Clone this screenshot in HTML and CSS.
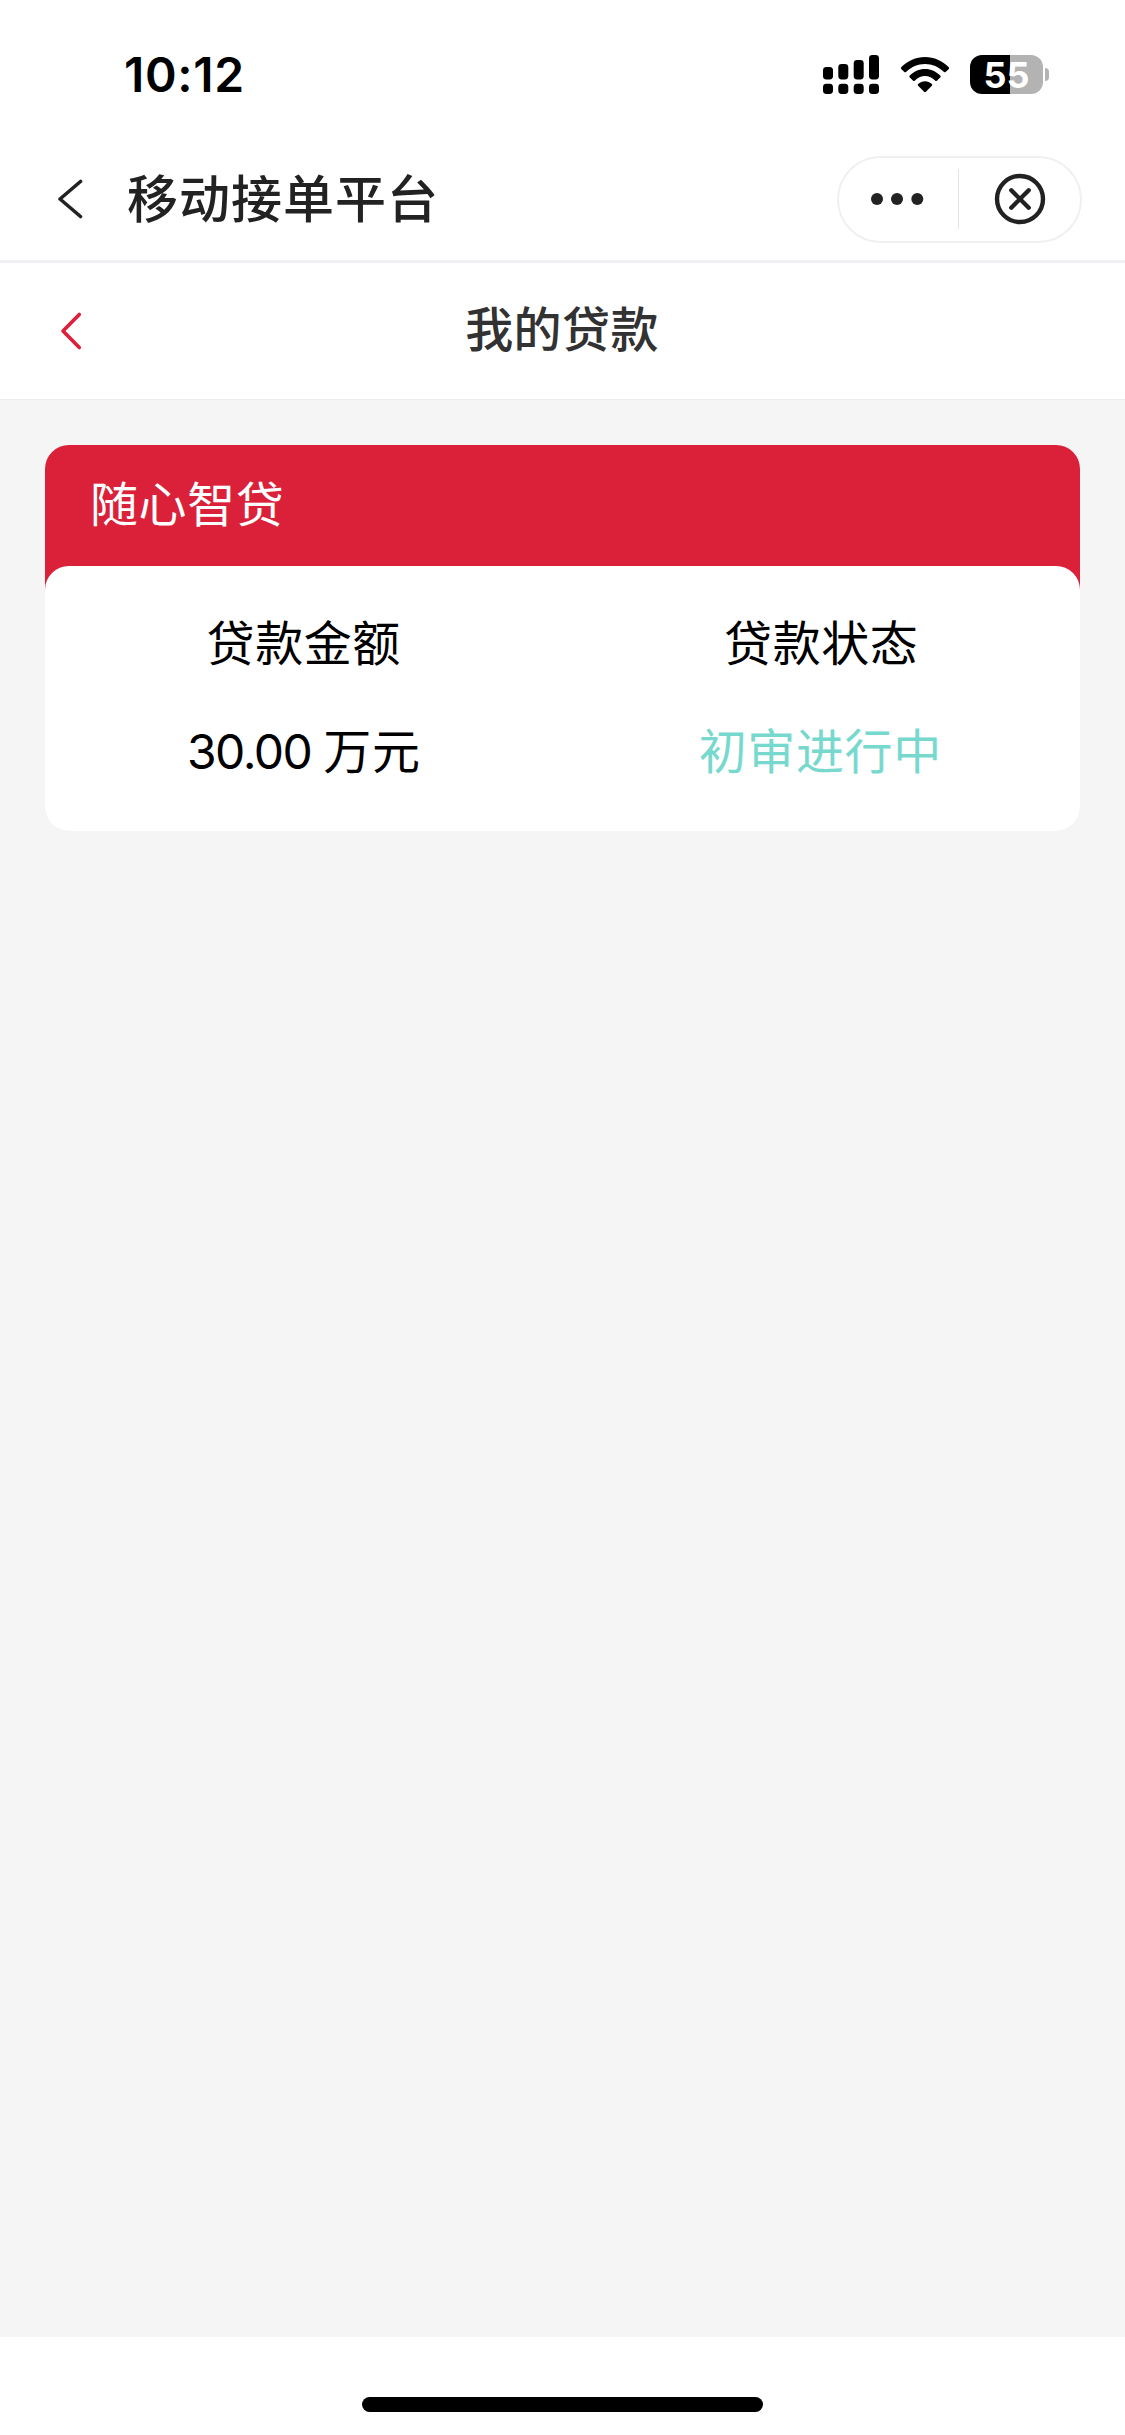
FILE: index.html
```html
<!DOCTYPE html>
<html lang="zh-CN">
<head>
<meta charset="utf-8">
<title>我的贷款</title>
<link rel="stylesheet" href="styles.css">
</head>
<body>
<div class="screen">
  <div class="status-bar">
    <span class="time">10:12</span>
    <div class="status-icons">
      <svg class="signal" width="56" height="39" viewBox="0 0 56 39">
        <rect x="0" y="12" width="10" height="12.5" rx="3.4"/>
        <rect x="15.3" y="9" width="10" height="15.5" rx="3.4"/>
        <rect x="30.7" y="5" width="10" height="19.5" rx="3.4"/>
        <rect x="46" y="0" width="10" height="24.5" rx="3.4"/>
        <rect x="0" y="28.7" width="10" height="10.3" rx="3.4"/>
        <rect x="15.3" y="28.7" width="10" height="10.3" rx="3.4"/>
        <rect x="30.7" y="28.7" width="10" height="10.3" rx="3.4"/>
        <rect x="46" y="28.7" width="10" height="10.3" rx="3.4"/>
      </svg>
      <svg class="wifi" width="50" height="39" viewBox="0 0 50 39">
        <path d="M1.2 12.3C7.5 5.6 16 1.9 25 1.9s17.500 3.700 23.800 10.400q.7.8 0 1.600l-3.200 3.100q-.8.7-1.600 0C38.900 11.800 32.200 8.900 25 8.900S11.100 11.800 6 17q-.8.7-1.600 0l-3.200-3.100q-.7-.8 0-1.600z"/>
        <path d="M9.600 20.700C13.700 16.400 19.100 13.900 25 13.900s11.300 2.500 15.400 6.800q.7.800 0 1.600l-3.500 3.400q-.8.700-1.600 0C32.500 22.800 29 21.100 25 21.100s-7.500 1.700-10.300 4.600q-.8.700-1.600 0l-3.500-3.400q-.7-.8 0-1.600z"/>
        <path d="M18.100 29.100C20 27.400 22.400 26.300 25 26.300s5 1.100 6.900 2.800q.8.800 0 1.600l-6 6q-.9.900-1.800 0l-6-6q-.8-.8 0-1.600z"/>
      </svg>
      <div class="battery">
        <div class="battery-body">55</div>
        <div class="battery-cap"></div>
      </div>
    </div>
  </div>

  <div class="app-bar">
    <svg class="app-back" width="26" height="42" viewBox="0 0 26 42">
      <path d="M23.500 3.500 3 21l20.500 17.500"/>
    </svg>
    <div class="app-title">移动接单平台</div>
    <div class="capsule">
      <svg class="more" width="54" height="14" viewBox="0 0 54 14">
        <circle cx="7" cy="7" r="6"/><circle cx="27" cy="7" r="6"/><circle cx="47.300" cy="7" r="6"/>
      </svg>
      <div class="capsule-divider"></div>
      <svg class="close" width="52" height="52" viewBox="0 0 52 52">
        <circle cx="26" cy="26" r="23"/>
        <path d="m17.300 17.300 17.400 17.400M34.700 17.300 17.300 34.700"/>
      </svg>
    </div>
  </div>

  <div class="page-bar">
    <svg class="page-back" width="24" height="40" viewBox="0 0 24 40">
      <path d="M20.300 3.500 4 20l16.300 16.500"/>
    </svg>
    <h1 class="page-title">我的贷款</h1>
  </div>

  <main class="content">
    <section class="card">
      <h2 class="card-title">随心智贷</h2>
      <div class="card-body">
        <div class="field">
          <div class="label">贷款金额</div>
          <div class="value"><span class="amount">30.00 </span>万元</div>
        </div>
        <div class="field">
          <div class="label">贷款状态</div>
          <div class="value status">初审进行中</div>
        </div>
      </div>
    </section>
  </main>

  <div class="home-area"><div class="home-indicator"></div></div>
</div>
</body>
</html>
```
FILE: styles.css
```css
* { box-sizing: border-box; }

body {
  margin: 0;
  background: #fff;
  color: #000;
  font-family: Inter, "Noto Sans CJK SC", sans-serif;
}

h1, h2 { margin: 0; }
svg { display: block; flex: none; }

.screen {
  width: 1125px;
  height: 2435px;
  display: flex;
  flex-direction: column;
}

/* Status bar */
.status-bar {
  height: 139px;
  padding: 0 76px 0 124px;
  display: flex;
  justify-content: space-between;
  flex: none;
}
.time {
  margin-top: 46px;
  font-size: 48px;
  line-height: 58px;
  font-weight: 600;
  letter-spacing: 0.7px;
}
.status-icons {
  height: 39px;
  margin-top: 55px;
  display: flex;
}
.wifi { margin: 0 20px 0 21px; }
.battery {
  display: flex;
  align-items: center;
  gap: 2px;
}
.battery-body {
  width: 73px;
  height: 39px;
  border-radius: 12px;
  background: linear-gradient(to right, #000 40px, #b3b3b3 40px);
  color: #fff;
  font-size: 36px;
  line-height: 40px;
  font-weight: 700;
  text-align: center;
}
.battery-cap {
  width: 4px;
  height: 13px;
  border-radius: 0 4px 4px 0;
  background: #b3b3b3;
}

/* Mini-program bar */
.app-bar {
  height: 124px;
  padding: 0 43px 1px 57px;
  display: flex;
  align-items: center;
  border-bottom: 3px solid #efeff4;
  flex: none;
}
.app-back { fill: none; stroke: #222; stroke-width: 3.6; stroke-linecap: round; stroke-linejoin: round; }
.app-title {
  margin-left: 44px;
  padding-top: 2px;
  color: #222;
  font-size: 51px;
  line-height: 60px;
  font-weight: 500;
  letter-spacing: 1px;
}
.capsule {
  width: 245px;
  height: 87px;
  margin-left: auto;
  padding-left: 31px;
  border: 2px solid #f0f0f0;
  border-radius: 44px;
  display: flex;
  align-items: center;
}
.more { fill: #222; }
.capsule-divider { width: 1px; height: 60px; margin: 0 35px 0 34px; background: #e4e4e4; }
.close { fill: none; stroke: #222; stroke-width: 4.4; stroke-linecap: round; }

/* Page bar */
.page-bar {
  height: 136px;
  padding: 0 59px;
  display: flex;
  align-items: center;
  flex: none;
}
.page-back { fill: none; stroke: #e01d3a; stroke-width: 3.6; stroke-linecap: round; stroke-linejoin: round; }
.page-title {
  flex: 1;
  margin-right: 25px;
  padding-bottom: 2px;
  color: #323233;
  font-size: 48px;
  line-height: 60px;
  font-weight: 500;
  letter-spacing: 0.4px;
  text-align: center;
}

/* Loan card */
.content {
  flex: 1;
  padding: 45px;
  border-top: 1px solid #ececec;
  background: #f5f5f5;
}
.card {
  border-radius: 24px;
  background: linear-gradient(#da2139 200px, #f7d5da 200px);
}
.card-title {
  height: 121px;
  padding: 28px 45px 0;
  color: #fff;
  font-size: 48px;
  line-height: 64px;
  font-weight: 400;
  letter-spacing: 0.6px;
}
.card-body {
  height: 265px;
  padding-top: 46px;
  border-radius: 24px;
  background: #fff;
  display: grid;
  grid-template-columns: 1fr 1fr;
  text-align: center;
}
.label, .value {
  font-size: 48px;
  line-height: 64px;
  letter-spacing: 0.6px;
}
.value { margin-top: 44px; }
.amount { letter-spacing: -1.5px; }
.status { padding-right: 2px; color: #77d9ce; }

/* Home indicator */
.home-area {
  height: 98px;
  padding-top: 60px;
  display: flex;
  justify-content: center;
  background: #fff;
  flex: none;
}
.home-indicator { width: 401px; height: 15px; border-radius: 8px; background: #000; }
```
